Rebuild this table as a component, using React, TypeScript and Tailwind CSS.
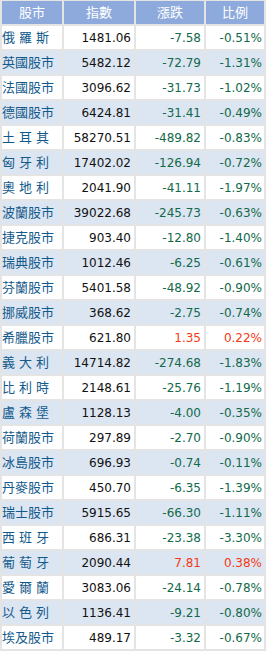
const ROWS: [string, string, string, string][] = [
  ["俄羅斯", "1481.06", "-7.58", "-0.51%"],
  ["英國股市", "5482.12", "-72.79", "-1.31%"],
  ["法國股市", "3096.62", "-31.73", "-1.02%"],
  ["德國股市", "6424.81", "-31.41", "-0.49%"],
  ["土耳其", "58270.51", "-489.82", "-0.83%"],
  ["匈牙利", "17402.02", "-126.94", "-0.72%"],
  ["奧地利", "2041.90", "-41.11", "-1.97%"],
  ["波蘭股市", "39022.68", "-245.73", "-0.63%"],
  ["捷克股市", "903.40", "-12.80", "-1.40%"],
  ["瑞典股市", "1012.46", "-6.25", "-0.61%"],
  ["芬蘭股市", "5401.58", "-48.92", "-0.90%"],
  ["挪威股市", "368.62", "-2.75", "-0.74%"],
  ["希臘股市", "621.80", "1.35", "0.22%"],
  ["義大利", "14714.82", "-274.68", "-1.83%"],
  ["比利時", "2148.61", "-25.76", "-1.19%"],
  ["盧森堡", "1128.13", "-4.00", "-0.35%"],
  ["荷蘭股市", "297.89", "-2.70", "-0.90%"],
  ["冰島股市", "696.93", "-0.74", "-0.11%"],
  ["丹麥股市", "450.70", "-6.35", "-1.39%"],
  ["瑞士股市", "5915.65", "-66.30", "-1.11%"],
  ["西班牙", "686.31", "-23.38", "-3.30%"],
  ["葡萄牙", "2090.44", "7.81", "0.38%"],
  ["愛爾蘭", "3083.06", "-24.14", "-0.78%"],
  ["以色列", "1136.41", "-9.21", "-0.80%"],
  ["埃及股市", "489.17", "-3.32", "-0.67%"],
];

const HEADERS = ["股市", "指數", "漲跌", "比例"];

export default function App() {
  return (
    <div className="w-[266px] bg-[#e4e4e4] pt-[1px] px-[2px] pb-[2px] font-['DejaVu_Sans','Noto_Sans_CJK_TC',sans-serif]">
      <div className="grid grid-cols-[60px_70px_68px_58px] gap-[2px]">
        {HEADERS.map((h) => (
          <div key={h} className="h-[23px] bg-[#8eaadc] text-white text-[13px] flex items-center justify-center">
            {h}
          </div>
        ))}
        {ROWS.map(([name, idx, chg, pct], i) => {
          const bg = i % 2 === 0 ? "bg-white" : "bg-[#dce6f2]";
          const up = !chg.startsWith("-");
          const tone = up ? "text-[#f23a14]" : "text-[#13694a]";
          return [
            <div key={name + "n"} className={`h-[23px] ${bg} flex items-center text-[13px] text-[#135a8c] ${name.length === 3 ? "tracking-[4px]" : ""}`}>
              {name}
            </div>,
            <div key={name + "i"} className={`h-[23px] ${bg} flex items-center justify-end pr-[3px] text-[12px] text-[#111]`}>
              {idx}
            </div>,
            <div key={name + "c"} className={`h-[23px] ${bg} flex items-center justify-end pr-[3px] text-[12px] ${tone}`}>
              {chg}
            </div>,
            <div key={name + "p"} className={`h-[23px] ${bg} flex items-center justify-end pr-[2px] text-[12px] ${tone}`}>
              {pct}
            </div>,
          ];
        })}
      </div>
    </div>
  );
}
